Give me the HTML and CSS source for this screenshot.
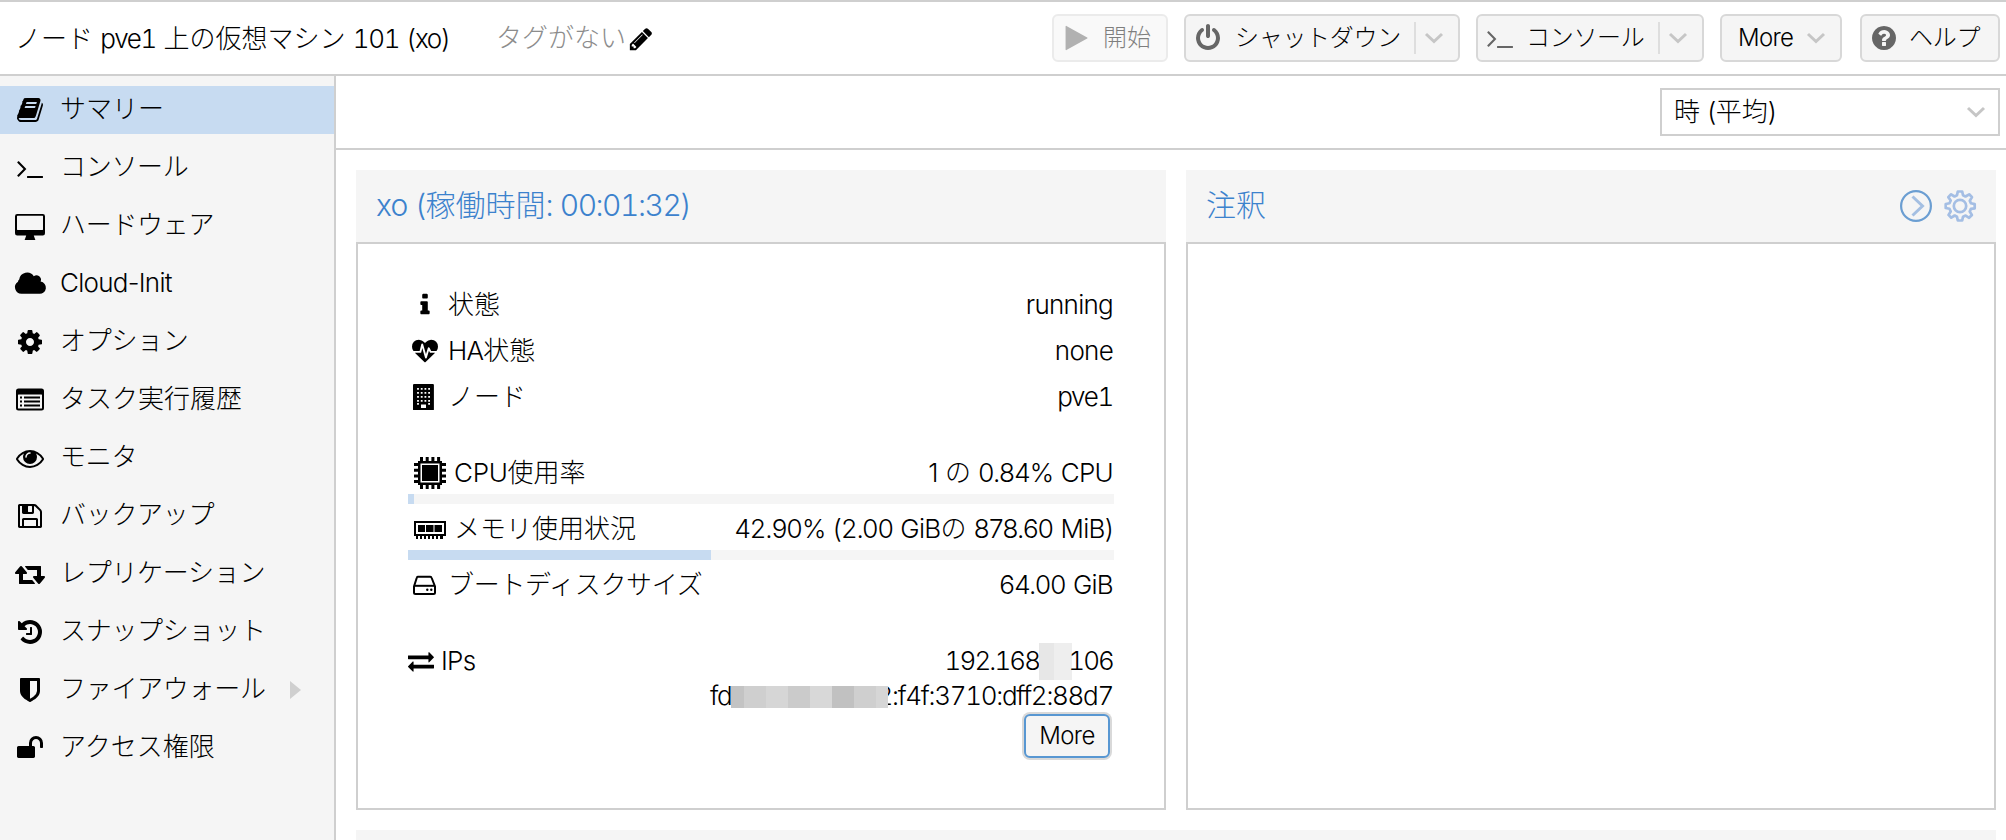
FILE: index.html
```html
<!DOCTYPE html>
<html lang="ja">
<head>
<meta charset="utf-8">
<title>pve1 - xo</title>
<link rel="stylesheet" href="styles.css">
</head>
<body>
<header class="topbar">
  <h1 class="title">ノード <span class="l t">pve1</span> 上の仮想マシン <span class="l t">101 (xo)</span></h1>
  <div class="tags">タグがない<svg class="pencil" viewBox="0 0 1792 1792"><path d="M491 1536l91-91-235-235-91 91v107h128v128h107zm523-928q0-22-22-22-10 0-17 7l-542 542q-7 7-7 17 0 22 22 22 10 0 17-7l542-542q7-7 7-17zm-54-192l416 416-832 832h-416v-416zm683 96q0 53-37 90l-166 166-416-416 166-165q36-38 90-38 53 0 91 38l235 234q37 39 37 91z"/></svg></div>
  <div class="actions">
    <button class="btn start" disabled><svg class="bi" viewBox="0 0 1792 1792"><path d="M1676 927l-1328 738q-23 13-39.500 3t-16.500-36v-1472q0-26 16.500-36t39.500 3l1328 738q23 13 23 31t-23 31z"/></svg><span>開始</span></button>
    <button class="btn shutdown"><svg class="bi" viewBox="0 0 1792 1792"><path d="M1664 896q0 156-61 298t-164 245-245 164-298 61-298-61-245-164-164-245-61-298q0-182 80.500-343t226.500-270q43-32 95.500-25t83.500 50q32 42 24.500 94.500t-49.500 84.500q-98 74-151.500 181t-53.500 228q0 104 40.500 198.500t109.500 163.500 163.500 109.500 198.500 40.500 198.500-40.500 163.500-109.500 109.500-163.500 40.500-198.500q0-121-53.500-228t-151.500-181q-42-32-49.500-84.500t24.500-94.500q31-43 84-50t95 25q146 109 226.500 270t80.500 343zm-640-768v640q0 52-38 90t-90 38-90-38-38-90v-640q0-52 38-90t90-38 90 38 38 90z"/></svg><span class="k">シャットダウン</span><i class="split"></i><svg class="chev" viewBox="0 0 20 12"><path d="M2 2l8 7.500L18 2"/></svg></button>
    <button class="btn console"><svg class="bi" viewBox="0 0 1792 1792"><path d="M649 983l-466 466q-10 10-23 10t-23-10l-50-50q-10-10-10-23t10-23l393-393-393-393q-10-10-10-23t10-23l50-50q10-10 23-10t23 10l466 466q10 10 10 23t-10 23zm1079 457v64q0 14-9 23t-23 9h-960q-14 0-23-9t-9-23v-64q0-14 9-23t23-9h960q14 0 23 9t9 23z"/></svg><span class="k">コンソール</span><i class="split"></i><svg class="chev" viewBox="0 0 20 12"><path d="M2 2l8 7.500L18 2"/></svg></button>
    <button class="btn more"><span class="l">More</span><svg class="chev" viewBox="0 0 20 12"><path d="M2 2l8 7.500L18 2"/></svg></button>
    <button class="btn help"><svg class="bi" viewBox="0 0 1792 1792"><path d="M1024 1376v-192q0-14-9-23t-23-9h-192q-14 0-23 9t-9 23v192q0 14 9 23t23 9h192q14 0 23-9t9-23zm256-672q0-88-55.500-163t-138.500-116-170-41q-243 0-371 213-15 24 8 42l132 100q7 6 19 6 16 0 25-12 53-68 86-92 34-24 86-24 48 0 85.500 26t37.500 59q0 38-20 61t-68 45q-63 28-115.500 86.500t-52.500 125.500v36q0 14 9 23t23 9h192q14 0 23-9t9-23q0-19 21.500-49.500t54.500-49.500q32-18 49-28.500t46-35 44.500-48 28-60.500 12.500-81zm384 192q0 209-103 385.500t-279.500 279.500-385.500 103-385.500-103-279.500-279.500-103-385.500 103-385.500 279.500-279.500 385.500-103 385.500 103 279.500 279.500 103 385.500z"/></svg><span class="k">ヘルプ</span></button>
  </div>
</header>
<div class="main">
  <nav class="side">
    <a class="item on"><svg viewBox="0 0 1792 1792"><path d="M1703 478q40 57 18 129l-275 906q-19 64-76.500 107.500t-122.500 43.500h-923q-77 0-148.500-53.500t-99.500-131.500q-24-67-2-127 0-4 3-27t4-37q1-8-3-21.500t-3-19.500q2-11 8-21t16.500-23.500 16.500-23.500q23-38 45-91.500t30-91.500q3-10 .5-30t-.5-28q3-11 17-28t17-23q21-36 42-92t25-90q1-9-2.500-32t.5-28q4-13 22-30.500t22-22.500q19-26 42.500-84.500t27.500-96.500q1-8-3-25.500t-2-26.500q2-8 9-18t18-23 17-21q8-12 16.500-30.500t15-35 16-36 19.500-32 26.500-23.500 36-11.500 47.500 5.500l-1 3q38-9 51-9h761q74 0 114 56t18 130l-274 906q-36 119-71.500 153.500t-128.500 34.500h-869q-27 0-38 15-11 16-1 43 24 70 144 70h923q29 0 56-15.500t35-41.500l300-987q7-22 5-57 38 15 59 43zm-1064 2q-4 13 2 22.500t20 9.500h608q13 0 25.500-9.500t16.500-22.500l21-64q4-13-2-22.500t-20-9.500h-608q-13 0-25.500 9.500t-16.500 22.500zm-83 256q-4 13 2 22.500t20 9.500h608q13 0 25.500-9.500t16.500-22.500l21-64q4-13-2-22.500t-20-9.500h-608q-13 0-25.500 9.500t-16.500 22.500z"/></svg><span>サマリー</span></a>
    <a class="item"><svg viewBox="0 0 1792 1792"><path d="M649 983l-466 466q-10 10-23 10t-23-10l-50-50q-10-10-10-23t10-23l393-393-393-393q-10-10-10-23t10-23l50-50q10-10 23-10t23 10l466 466q10 10 10 23t-10 23zm1079 457v64q0 14-9 23t-23 9h-960q-14 0-23-9t-9-23v-64q0-14 9-23t23-9h960q14 0 23 9t9 23z"/></svg><span class="k">コンソール</span></a>
    <a class="item"><svg viewBox="0 0 28 28"><path fill-rule="evenodd" d="M1.200 2H26.800Q29 2 29 4.200V21.200Q29 23.400 26.800 23.400H17.800L18.800 26.500Q19.300 27 19.300 28H8.700Q8.700 27 9.200 26.500L10.200 23.400H1.200Q-1 23.400-1 21.200V4.200Q-1 2 1.200 2zM1.500 3.800Q1 3.800 1 4.300V17.600Q1 18 1.500 18H26.500Q27 18 27 17.600V4.300Q27 3.800 26.500 3.800z"/></svg><span class="k">ハードウェア</span></a>
    <a class="item"><svg viewBox="0 0 28 28"><path d="M5.500 23.700A6.500 6.500 0 0 1 2 11.700Q2 10.500 3.200 9.500A8 8 0 0 1 17.800 6.200A4.500 4.500 0 0 1 24.600 11.600A6.100 6.100 0 0 1 23 23.700z"/></svg><span class="l">Cloud-Init</span></a>
    <a class="item"><svg viewBox="0 0 1792 1792"><path d="M1152 896q0-106-75-181t-181-75-181 75-75 181 75 181 181 75 181-75 75-181zm512-109v222q0 12-8 23t-20 13l-185 28q-19 54-39 91 35 50 107 138 10 12 10 25t-9 23q-27 37-99 108t-94 71q-12 0-26-9l-138-108q-44 23-91 38-16 136-29 186-7 28-36 28h-222q-14 0-24.500-8.500t-11.500-21.500l-28-184q-49-16-90-37l-141 107q-10 9-25 9-14 0-25-11-126-114-165-168-7-10-7-23 0-12 8-23 15-21 51-66.500t54-70.500q-27-50-41-99l-183-27q-13-2-21-12.500t-8-23.500v-222q0-12 8-23t19-13l186-28q14-46 39-92-40-57-107-138-10-12-10-24 0-10 9-23 26-36 98.500-107.500t94.500-71.500q13 0 26 10l138 107q44-23 91-38 16-136 29-186 7-28 36-28h222q14 0 24.500 8.500t11.500 21.500l28 184q49 16 90 37l142-107q9-9 24-9 13 0 25 10 129 119 165 170 7 8 7 22 0 12-8 23-15 21-51 66.500t-54 70.500q26 50 41 98l183 28q13 2 21 12.500t8 23.500z"/></svg><span class="k">オプション</span></a>
    <a class="item"><svg viewBox="0 0 28 28"><path fill-rule="evenodd" d="M2.500 2.500H25.500Q28 2.500 28 5V22Q28 24.500 25.500 24.500H2.500Q0 24.500 0 22V5Q0 2.500 2.500 2.500zM2.500 8.500Q2 8.500 2 9V22Q2 22.500 2.500 22.500H25.500Q26 22.500 26 22V9Q26 8.500 25.500 8.500zM4 10.500h2v2H4zM8 10.500h16v2H8zM4 14.500h2v2H4zM8 14.500h16v2H8zM4 18.500h2v2H4zM8 18.500h16v2H8z"/></svg><span>タスク実行履歴</span></a>
    <a class="item"><svg viewBox="0 0 1792 1792"><path d="M1664 960q-152-236-381-353 61 104 61 225 0 185-131.500 316.500t-316.500 131.500-316.500-131.500-131.500-316.500q0-121 61-225-229 117-381 353 133 205 333.500 326.500t434.500 121.500 434.500-121.500 333.500-326.500zm-720-384q0-20-14-34t-34-14q-125 0-214.500 89.500t-89.500 214.500q0 20 14 34t34 14 34-14 14-34q0-86 61-147t147-61q20 0 34-14t14-34zm848 384q0 34-20 69-140 230-376.500 368.500t-499.500 138.500-499.500-139-376.500-368q-20-35-20-69t20-69q140-229 376.500-368t499.500-139 499.500 139 376.500 368q20 35 20 69z"/></svg><span class="k">モニタ</span></a>
    <a class="item"><svg viewBox="0 0 1792 1792"><path d="M512 1536h768v-384h-768v384zm896 0h128v-896q0-14-10-38.500t-20-34.500l-281-281q-10-10-34-20t-39-10v416q0 40-28 68t-68 28h-576q-40 0-68-28t-28-68v-416h-128v1280h128v-416q0-40 28-68t68-28h832q40 0 68 28t28 68v416zm-384-928v-320q0-13-9.500-22.500t-22.500-9.500h-192q-13 0-22.500 9.500t-9.500 22.500v320q0 13 9.500 22.500t22.500 9.500h192q13 0 22.500-9.500t9.500-22.500zm640 32v928q0 40-28 68t-68 28h-1344q-40 0-68-28t-28-68v-1344q0-40 28-68t68-28h928q40 0 88 20t76 48l280 280q28 28 48 76t20 88z"/></svg><span class="k">バックアップ</span></a>
    <a class="item"><svg class="wide" viewBox="0 0 1920 1792"><path d="M1280 1504q0 13-9.500 22.500t-22.500 9.500h-960q-8 0-13.500-2t-9-7-5.500-8-3-11.500-1-11.500v-600h-192q-26 0-45-19t-19-45q0-24 15-41l320-384q19-22 49-22t49 22l320 384q15 17 15 41 0 26-19 45t-45 19h-192v384h576q16 0 25 11l160 192q7 10 7 21zm640-416q0 24-15 41l-320 384q-20 23-49 23t-49-23l-320-384q-15-17-15-41 0-26 19-45t45-19h192v-384h-576q-16 0-25-12l-160-192q-7-9-7-20 0-13 9.500-22.500t22.500-9.500h960q8 0 13.500 2t9 7 5.500 8 3 11.500 1 11.500v600h192q26 0 45 19t19 45z"/></svg><span class="k">レプリケーション</span></a>
    <a class="item"><svg viewBox="0 0 1792 1792"><path d="M1664 896q0 156-61 298t-164 245-245 164-298 61q-172 0-327-72.500t-264-204.500q-7-10-6.500-22.500t8.500-20.500l137-138q10-9 25-9 16 2 23 12 73 95 179 147t225 52q104 0 198.500-40.500t163.500-109.500 109.500-163.500 40.500-198.500-40.500-198.500-109.500-163.500-163.500-109.500-198.500-40.500q-98 0-188 35.500t-160 101.500l137 138q31 30 14 69-17 40-59 40h-448q-26 0-45-19t-19-45v-448q0-42 40-59 39-17 69 14l130 129q107-101 244.500-156.500t284.500-55.500q156 0 298 61t245 164 164 245 61 298zm-640-288v448q0 14-9 23t-23 9h-320q-14 0-23-9t-9-23v-64q0-14 9-23t23-9h224v-352q0-14 9-23t23-9h64q14 0 23 9t9 23z"/></svg><span class="k">スナップショット</span></a>
    <a class="item"><svg viewBox="0 0 1792 1792"><path d="M1344 960v-640h-448v1137q119-63 213-137 235-184 235-360zm192-768v768q0 86-33.500 170.500t-83 150-118 127.500-126.500 103-121 77.500-89.500 49.500-42.500 20q-12 6-26 6t-26-6q-16-7-42.500-20t-89.500-49.500-121-77.500-126.500-103-118-127.500-83-150-33.500-170.500v-768q0-26 19-45t45-19h1152q26 0 45 19t19 45z"/></svg><span class="k">ファイアウォール</span><i class="expand"></i></a>
    <a class="item"><svg viewBox="0 0 1792 1792"><path d="M1728 576v256q0 26-19 45t-45 19h-64q-26 0-45-19t-19-45v-256q0-106-75-181t-181-75-181 75-75 181v192h96q40 0 68 28t28 68v576q0 40-28 68t-68 28h-960q-40 0-68-28t-28-68v-576q0-40 28-68t68-28h672v-192q0-185 131.500-316.500t316.500-131.500 316.500 131.500 131.500 316.500z"/></svg><span>アクセス権限</span></a>
  </nav>
  <section class="content">
    <div class="toolbar"><div class="combo"><span>時 <span class="l">(</span>平均<span class="l">)</span></span><svg class="chev" viewBox="0 0 20 12"><path d="M2 2l8 7.500L18 2"/></svg></div></div>
    <div class="panels">
      <article class="panel">
        <h2 class="phead"><span><span class="l">xo (</span>稼働時間<span class="l t">: 00:01:32)</span></span></h2>
        <div class="pbody status">
          <div class="row"><svg class="ri" viewBox="0 0 1792 1792"><path d="M1216 1344v128q0 26-19 45t-45 19h-512q-26 0-45-19t-19-45v-128q0-26 19-45t45-19h64v-384h-64q-26 0-45-19t-19-45v-128q0-26 19-45t45-19h384q26 0 45 19t19 45v576h64q26 0 45 19t19 45zm-128-1152v192q0 26-19 45t-45 19h-256q-26 0-45-19t-19-45v-192q0-26 19-45t45-19h256q26 0 45 19t19 45z"/></svg><span>状態</span><b class="l">running</b></div>
          <div class="row"><svg class="ri" viewBox="0 0 1792 1792"><path d="M1280 1024h305q-5 6-10 10.500t-9 7.500l-3 4-623 600q-18 18-44 18t-44-18l-624-602q-5-2-21-20h369q22 0 39.500-13.500t22.500-34.500l70-281 190 667q6 20 23 33t39 13q21 0 38-13t23-33l146-485 56 112q18 35 57 35zm512-428q0 145-103 300h-369l-111-221q-8-17-25.500-27t-36.500-8q-45 5-56 46l-129 430-196-686q-6-20-23.500-33t-39.500-13-39 13.500-22 34.500l-116 464h-423q-103-155-103-300 0-220 127-344t351-124q62 0 126.500 21.500t120 58 95.500 68.500 76 68q36-36 76-68t95.500-68.500 120-58 126.500-21.500q224 0 351 124t127 344z"/></svg><span><span class="l">HA</span>状態</span><b class="l">none</b></div>
          <div class="row"><svg class="ri" viewBox="0 0 26 26"><path fill-rule="evenodd" d="M2.100 0H20.900Q21.900 0 21.900 1V25.500Q21.900 26 21.400 26H1.600Q1 26 1 25.500V1Q1 0 2.100 0zM5.100 4h1.800v1.800H5.100zm3.700 0h1.800v1.800H8.800zm3.700 0h1.800v1.800h-1.800zm3.700 0h1.800v1.800h-1.800zM5.100 8h1.800v1.800H5.100zm3.700 0h1.800v1.800H8.800zm3.700 0h1.800v1.800h-1.800zm3.700 0h1.800v1.800h-1.800zM5.100 12h1.800v1.800H5.100zm3.700 0h1.800v1.800H8.800zm3.700 0h1.800v1.800h-1.800zm3.700 0h1.800v1.800h-1.800zM5.100 16h1.800v1.800H5.100zm3.700 0h1.800v1.800H8.800zm3.700 0h1.800v1.800h-1.800zm3.700 0h1.800v1.800h-1.800zM5.100 19h1.800v1.800H5.100zm11.100 0h1.800v1.800h-1.800zM9 20.500v3.500h5v-3.500z"/></svg><span>ノード</span><b class="l t">pve1</b></div>
          <div class="row cpu"><svg class="chip" viewBox="0 0 32 32"><path fill-rule="evenodd" d="M4 4h24v24H4zM6.500 6.500v19h19v-19z"/><path d="M8 8h16v16H8zM6 0h3v4H6zm5.700 0h3v4h-3zm5.700 0h3v4h-3zm5.700 0h3v4h-3zM6 28h3v4H6zm5.700 0h3v4h-3zm5.700 0h3v4h-3zm5.700 0h3v4h-3zM0 6v3h4V6zm0 5.700v3h4v-3zm0 5.700v3h4v-3zm0 5.700v3h4v-3zM28 6v3h4V6zm0 5.700v3h4v-3zm0 5.700v3h4v-3zm0 5.700v3h4v-3z"/></svg><span><span class="l c">CPU</span>使用率</span><b><span class="l">1</span> の <span class="l">0.84% CPU</span></b></div>
          <div class="bar"><i style="width:0.840%"></i></div>
          <div class="row mem"><svg class="chip" viewBox="0 0 32 32"><path fill-rule="evenodd" d="M0 7h32v15H0zM2 9v11h28V9z"/><path d="M4 11h7v7H4zM12 11h7.500v7H12zM20.500 11h7.500v7h-7.500zM2 22h2v3H2zm4 0h2v3H6zm4 0h2v3h-2zm4 0h2v3h-2zm4 0h2v3h-2zm4 0h2v3h-2zm4 0h3v3h-3z"/></svg><span>メモリ使用状況</span><b><span class="l">42.90% (2.00 GiB</span>の <span class="l">878.60 MiB)</span></b></div>
          <div class="bar"><i style="width:42.900%"></i></div>
          <div class="row disk"><svg class="ri" viewBox="0 0 26 26"><g fill="none" stroke="#000" stroke-width="2"><path d="M5.700 4.800H18.300Q19.300 4.800 19.700 6L23 14.500V20.500Q23 22 21.500 22H3.500Q2 22 2 20.500V14.500L4.700 6Q5 4.800 5.700 4.800z"/><path d="M2 13.800H23"/></g><circle cx="15.300" cy="17.800" r="1.200"/><circle cx="19.300" cy="17.800" r="1.200"/></svg><span class="k">ブートディスクサイズ</span><b class="l">64.00 GiB</b></div>
          <div class="row ips"><svg viewBox="0 0 1792 1792"><path d="M1792 1184v192q0 13-9.500 22.500t-22.500 9.500h-1376v192q0 13-9.500 22.500t-22.500 9.500q-12 0-24-10l-319-320q-9-9-9-22 0-14 9-23l320-320q9-9 23-9 13 0 22.500 9.500t9.500 22.500v192h1376q13 0 22.500 9.500t9.500 22.500zm0-544q0 14-9 23l-320 320q-9 9-23 9-13 0-22.500-9.500t-9.500-22.500v-192h-1376q-13 0-22.500-9.500t-9.500-22.500v-192q0-13 9.500-22.500t22.500-9.500h1376v-192q0-14 9-23t23-9q12 0 24 10l319 319q9 9 9 23z"/></svg><span class="l">IPs</span><b class="l t ip ip4">192.168<i class="mask4"></i>106</b></div>
          <div class="row ip6"><b class="l t ip">fd<i class="mask6"></i><em>2</em>:f4f:3710:dff2:88d7</b></div>
          <button class="btn ipmore"><span class="l">More</span></button>
        </div>
      </article>
      <article class="panel">
        <h2 class="phead"><span>注釈</span><svg class="tool" viewBox="0 0 32 32"><circle cx="16" cy="16" r="14.900" stroke="#6b9ed2" stroke-width="2.200"/><path d="M12.500 6.500l10 9.500-10 9.500" stroke="#a4bfe2" stroke-width="3"/></svg><svg class="tool" viewBox="0 0 32 32"><g stroke="#a4bee4" stroke-width="2.700" stroke-linejoin="round"><path d="M13.800 1.500h4.400l.8 3.800 2.500 1.200 3.700-2.200 2.800 2.800-2.200 3.700 1.200 2.500 3.700.8v4.200l-3.800.6-1.200 2.700 2.200 3.400-2.800 2.800-3.400-2.200-2.700 1.200-.8 3.700h-4.400l-.8-3.800-2.300-1.200-3.400 2.200-2.800-2.800 2.200-3.400-1.200-2.700-3.800-.8v-4l3.800-.8 1.200-2.700L4.300 7.100l2.800-2.800 3.400 2.200 2.500-1.200z"/><circle cx="16" cy="16" r="6.200"/></g></svg></h2>
        <div class="pbody"></div>
      </article>
      <div class="next"></div>
    </div>
  </section>
</div>
</body>
</html>
```
FILE: styles.css
```css
*{box-sizing:border-box}
html,body{height:100%}
body{margin:0;display:flex;flex-direction:column;overflow:hidden;background:#fff;color:#000;font:300 26px/32px Inter,"Noto Sans CJK JP",sans-serif}
.l{letter-spacing:-.028em;word-spacing:.028em;white-space:pre}
.t{font-variant-numeric:tabular-nums;letter-spacing:-.05em;word-spacing:.04em}
.k{letter-spacing:-.3px}
.c{letter-spacing:-.01em}
svg{display:block;flex:none;overflow:visible}
b{font-weight:300}
button{font:inherit;color:inherit}
i,em{font-style:normal}

.topbar{height:76px;flex:none;display:flex;align-items:center;border:solid #cfcfcf;border-width:2px 0;padding:0 6px 0 15px}
.title{margin:0;padding-top:2px;font-size:26px;font-weight:300;width:481px;white-space:nowrap}
.tags{display:flex;align-items:center;color:#8c8c8c}
.pencil{width:26px;height:26px;fill:#000;margin:1px 0 0 2px}
.actions{margin-left:auto;display:flex}
.btn{height:48px;flex:none;display:flex;align-items:center;border:2px solid #d8d8d8;border-radius:6px;background:#f5f5f5;padding:0;font-size:24px;white-space:nowrap}
.bi{width:28px;height:28px;fill:#666}
.chev{width:20px;height:12px;fill:none;stroke:#c6c6c6;stroke-width:3}
.split{width:2px;height:32px;background:#dedede}
.start{width:116px;padding-left:7px;gap:14px;opacity:.5}
.shutdown{width:276px;margin-left:16px;padding-left:8px}
.shutdown span{margin-left:13px;width:179px;text-align:left}
.shutdown .chev,.console .chev{margin-left:8px}
.console{width:228px;margin-left:16px;padding-left:8px}
.console span{margin-left:12px;width:132px;text-align:left}
.more{width:122px;margin-left:16px;padding-left:16px}
.more span{width:68px;text-align:left}
.help{width:140px;margin-left:18px;padding-left:8px}
.help span{margin-left:11px}

.main{flex:1;display:flex;min-height:0}
.side{width:336px;flex:none;background:#f5f5f5;border-right:2px solid #cfcfcf;padding-top:10px;display:flex;flex-direction:column;gap:10px}
.item{height:48px;flex:none;display:flex;align-items:center;padding-left:16px}
.item svg{width:28px;height:28px}
.item .wide{width:30px;margin:0 -1px}
.item span{margin-left:16px;padding-bottom:2px;white-space:nowrap}
.on{background:#c7dbf1}
.expand{margin-left:24px;border:solid transparent;border-width:9px 0 9px 11px;border-left-color:#cfcfcf}

.content{flex:1;display:flex;flex-direction:column;min-width:0}
.toolbar{height:74px;flex:none;border-bottom:2px solid #cfcfcf;padding:12px 6px 0 0;display:flex;justify-content:flex-end}
.combo{width:340px;height:48px;border:2px solid #cfcfcf;display:flex;align-items:center;justify-content:space-between;padding:0 12px}
.panels{flex:1;display:grid;grid-template:640px 1fr/1fr 1fr;gap:20px;padding:20px 10px 0 20px}
.panel{display:flex;flex-direction:column}
.phead{margin:0;height:72px;flex:none;background:#f5f5f5;color:#3c82cd;font-size:30px;font-weight:300;display:flex;align-items:center;padding:0 20px}
.phead>span{margin-right:auto;padding-bottom:2px;white-space:nowrap}
.tool{width:32px;height:32px;fill:none;margin-left:12px}
.pbody{flex:1;border:2px solid #cfcfcf}
.status{padding:38px 50px 0;display:flex;flex-direction:column}
.row{height:46px;flex:none;display:flex;align-items:center;white-space:nowrap}
.row>svg{width:26px;height:26px}
.row b{margin-left:auto;padding-right:1px}
.ri{margin-left:4px}
.row>svg.ri+span{margin-left:10px}
.row.cpu{margin-top:31px;height:43px}
.row>svg.chip{width:32px;height:32px;margin:1px 8px 0 6px}
.row.mem,.row.disk{padding-top:4px}
.bar{height:10px;flex:none;background:#f5f5f5}
.bar i{display:block;height:10px;background:#c7dbf1;min-width:6px}
.row.ips{margin-top:37px;height:36px}
.ips>svg{margin-right:7px}
.ip{display:flex;align-items:center}
.ip4{letter-spacing:-.073em}
.mask4{width:33px;height:37px;background:linear-gradient(90deg,#e7e7e7 15px,#eeeeee 15px);margin-right:-4px}
.row.ip6{height:34px}
.mask6{width:157px;height:22px;background:linear-gradient(90deg,#c3c3c3 13px,#cfcfcf 13px 35px,#d6d6d6 35px 57px,#cbcbcb 57px 79px,#d8d8d8 79px 101px,#c1c1c1 101px 123px,#cfcfcf 123px 145px,#d6d6d6 145px);position:relative;margin:2px -12px 0 0}
.ipmore{align-self:flex-end;width:86px;height:44px;border-color:#5897d2;justify-content:center;margin:1px 4px 0 0;box-shadow:0 0 0 2px #d9d9d9}
.next{grid-column:1/3;background:#f5f5f5}
```
